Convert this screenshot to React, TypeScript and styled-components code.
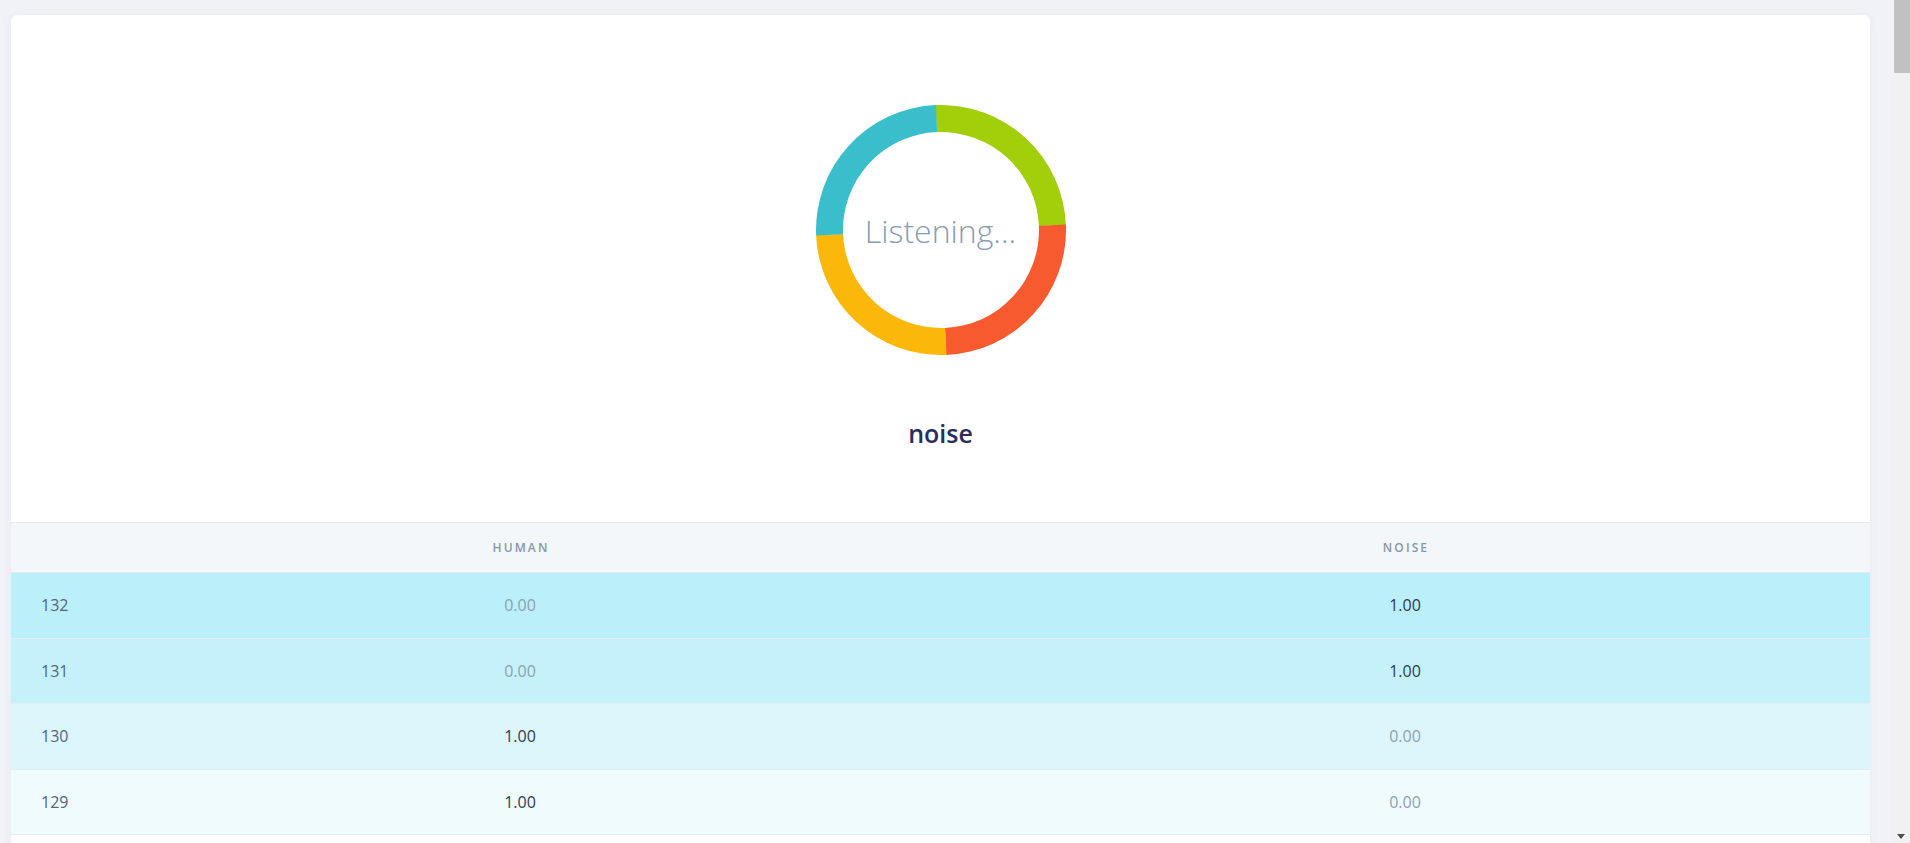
import React from "react";
import styled, { createGlobalStyle } from "styled-components";

const GlobalStyle = createGlobalStyle`
  html, body {
    margin: 0;
    padding: 0;
    background: #f1f2f8;
    font-family: "Open Sans", "Noto Sans", sans-serif;
  }
  * { box-sizing: border-box; }
`;

const Page = styled.div`
  padding: 15px 40px 0 11px;
`;

const Card = styled.section`
  background: #ffffff;
  border-radius: 6px;
  box-shadow: 0 0 8px rgba(40, 50, 90, 0.04);
  overflow: hidden;
`;

const Hero = styled.div`
  display: flex;
  flex-direction: column;
  align-items: center;
  padding: 90px 0 72px;
`;

const DonutWrap = styled.div`
  position: relative;
  width: 250px;
  height: 250px;
`;

const DonutLabel = styled.div`
  position: absolute;
  inset: 0;
  display: flex;
  align-items: center;
  justify-content: center;
  font-size: 32px;
  font-weight: 300;
  color: #8b9bb2;
`;

const Verdict = styled.h2`
  margin: 62px 0 0;
  font-size: 25px;
  line-height: 33px;
  font-weight: 600;
  color: #2a2d5b;
`;

const Grid = styled.div`
  display: grid;
  grid-template-columns: 89px 840px 1fr;
`;

const HeadRow = styled(Grid)`
  height: 51px;
  background: #f4f7fa;
  border-top: 1px solid #e4e9ef;
  border-bottom: 1px solid #e4e9ef;
  align-items: center;
`;

const HeadCell = styled.div`
  text-align: center;
  font-size: 12px;
  font-weight: 600;
  letter-spacing: 2.1px;
  color: #8896a8;
  text-transform: uppercase;
  padding-left: 2px;
`;

const tones = ["#bbeff9", "#c5f2fa", "#ddf6fc", "#effbfd"];

const BodyRow = styled(Grid)<{ $tone: number }>`
  height: 65.5px;
  align-items: center;
  background: ${(p) => (p.$tone < tones.length ? tones[p.$tone] : "#ffffff")};
  border-bottom: 1px solid #e3edf1;
`;

const IdCell = styled.div`
  padding-left: 30px;
  font-size: 16px;
  color: #55657b;
`;

const ValueCell = styled.div<{ $strong: boolean }>`
  text-align: center;
  font-size: 16px;
  font-weight: ${(p) => (p.$strong ? 500 : 400)};
  color: ${(p) => (p.$strong ? "#2e3950" : "#8e9fb0")};
`;

const ScrollTrack = styled.div`
  position: fixed;
  top: 0;
  right: 0;
  width: 17px;
  height: 100vh;
  background: #f1f1f1;
`;

const ScrollThumb = styled.div`
  position: absolute;
  top: 0;
  left: 1px;
  right: 0;
  height: 73px;
  background: #c1c1c1;
`;

const ScrollArrow = styled.div`
  position: absolute;
  bottom: 4px;
  left: 4px;
  width: 0;
  height: 0;
  border-left: 4.5px solid transparent;
  border-right: 4.5px solid transparent;
  border-top: 5px solid #505050;
`;

const segments = [
  { color: "#a2ce0a", start: -2.5 },
  { color: "#f75a2f", start: 87.5 },
  { color: "#fcb70b", start: 177.5 },
  { color: "#3bbecb", start: 267.5 },
];

function arcPath(startDeg: number, endDeg: number, rOut: number, rIn: number, c: number) {
  const toXY = (deg: number, r: number) => {
    const a = ((deg - 90) * Math.PI) / 180;
    return [c + r * Math.cos(a), c + r * Math.sin(a)];
  };
  const [x1, y1] = toXY(startDeg, rOut);
  const [x2, y2] = toXY(endDeg, rOut);
  const [x3, y3] = toXY(endDeg, rIn);
  const [x4, y4] = toXY(startDeg, rIn);
  return `M${x1} ${y1} A${rOut} ${rOut} 0 0 1 ${x2} ${y2} L${x3} ${y3} A${rIn} ${rIn} 0 0 0 ${x4} ${y4} Z`;
}

function Donut() {
  return (
    <DonutWrap>
      <svg width="250" height="250" viewBox="0 0 250 250">
        {segments.map((s) => (
          <path key={s.start} d={arcPath(s.start, s.start + 90.2, 125, 98, 125)} fill={s.color} />
        ))}
      </svg>
      <DonutLabel>Listening...</DonutLabel>
    </DonutWrap>
  );
}

type Row = { id: number; human: number; noise: number };

const rows: Row[] = Array.from({ length: 132 }, (_, i) => {
  const id = 132 - i;
  let human: number;
  if (i < 2) human = 0;
  else if (i < 4) human = 1;
  else human = Math.floor(i / 5) % 2 === 0 ? 1 : 0;
  return { id, human, noise: 1 - human };
});

export default function App() {
  return (
    <>
      <GlobalStyle />
      <Page>
        <Card>
          <Hero>
            <Donut />
            <Verdict>noise</Verdict>
          </Hero>
          <HeadRow>
            <HeadCell />
            <HeadCell>Human</HeadCell>
            <HeadCell>Noise</HeadCell>
          </HeadRow>
          {rows.map((r, i) => (
            <BodyRow key={r.id} $tone={i}>
              <IdCell>{r.id}</IdCell>
              <ValueCell $strong={r.human >= 0.5}>{r.human.toFixed(2)}</ValueCell>
              <ValueCell $strong={r.noise >= 0.5}>{r.noise.toFixed(2)}</ValueCell>
            </BodyRow>
          ))}
        </Card>
      </Page>
      <ScrollTrack>
        <ScrollThumb />
        <ScrollArrow />
      </ScrollTrack>
    </>
  );
}
